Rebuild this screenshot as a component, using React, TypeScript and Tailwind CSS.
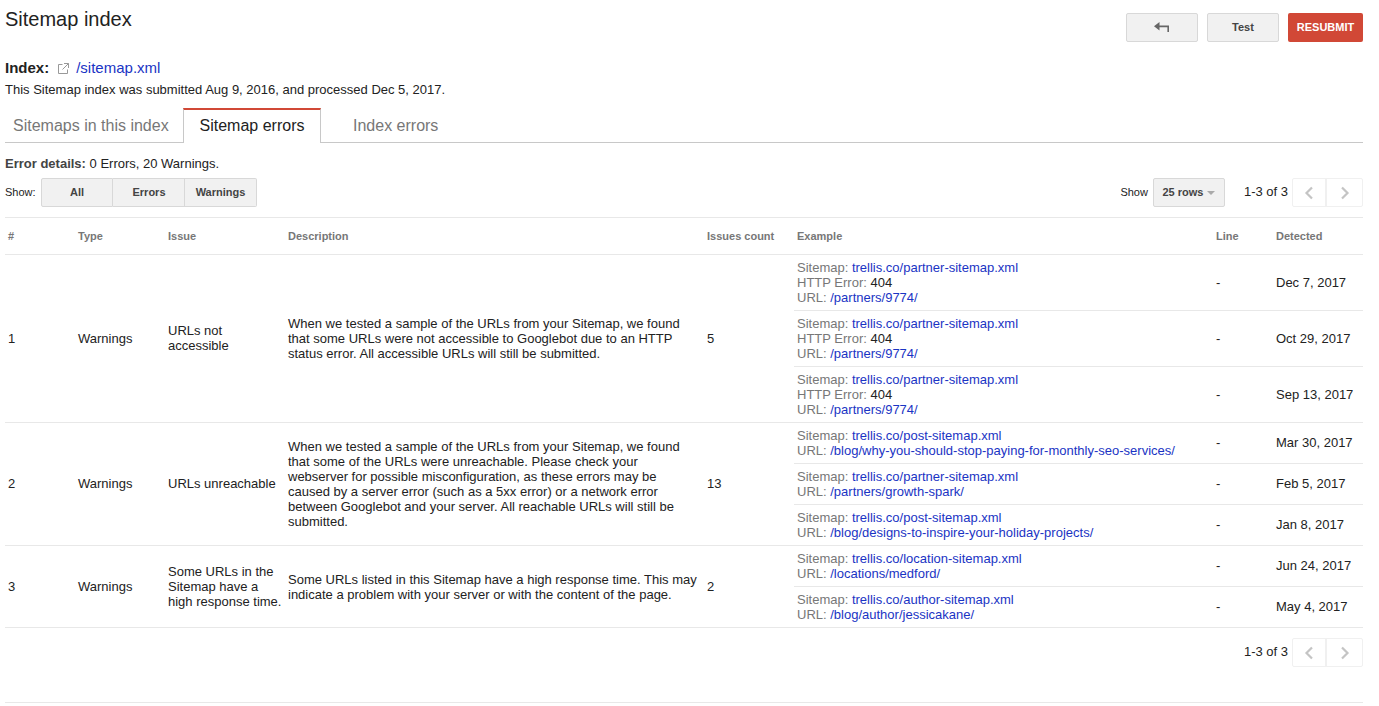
const rows = [
  {
    n: "1",
    issue: "URLs not accessible",
    issuePad: "pb-[2px]",
    cellPad: "",
    count: "5",
    desc: "When we tested a sample of the URLs from your Sitemap, we found that some URLs were not accessible to Googlebot due to an HTTP status error. All accessible URLs will still be submitted.",
    examples: [
      { sitemap: "trellis.co/partner-sitemap.xml", http: "404", url: "/partners/9774/", date: "Dec 7, 2017" },
      { sitemap: "trellis.co/partner-sitemap.xml", http: "404", url: "/partners/9774/", date: "Oct 29, 2017" },
      { sitemap: "trellis.co/partner-sitemap.xml", http: "404", url: "/partners/9774/", date: "Sep 13, 2017" },
    ],
  },
  {
    n: "2",
    issue: "URLs unreachable",
    issuePad: "pb-[2px]",
    cellPad: "pb-[2px]",
    count: "13",
    desc: "When we tested a sample of the URLs from your Sitemap, we found that some of the URLs were unreachable. Please check your webserver for possible misconfiguration, as these errors may be caused by a server error (such as a 5xx error) or a network error between Googlebot and your server. All reachable URLs will still be submitted.",
    examples: [
      { sitemap: "trellis.co/post-sitemap.xml", url: "/blog/why-you-should-stop-paying-for-monthly-seo-services/", date: "Mar 30, 2017" },
      { sitemap: "trellis.co/partner-sitemap.xml", url: "/partners/growth-spark/", date: "Feb 5, 2017" },
      { sitemap: "trellis.co/post-sitemap.xml", url: "/blog/designs-to-inspire-your-holiday-projects/", date: "Jan 8, 2017" },
    ],
  },
  {
    n: "3",
    issue: "Some URLs in the Sitemap have a high response time.",
    issuePad: "",
    cellPad: "",
    count: "2",
    desc: "Some URLs listed in this Sitemap have a high response time. This may indicate a problem with your server or with the content of the page.",
    examples: [
      { sitemap: "trellis.co/location-sitemap.xml", url: "/locations/medford/", date: "Jun 24, 2017" },
      { sitemap: "trellis.co/author-sitemap.xml", url: "/blog/author/jessicakane/", date: "May 4, 2017" },
    ],
  },
];

const grayBtn = "flex h-[29px] items-center justify-center rounded-[2px] border border-[#d8d8d8] bg-[#f1f1f1] text-[11px] font-bold text-[#444]";

function Pager() {
  return (
    <div className="flex items-center">
      <span className="mr-[4px] pb-[2px] text-[13px] text-[#222]">1-3 of 3</span>
      <div className="flex h-[29px] rounded-[2px] border border-[#f0f0f0]">
        <div className="flex w-[34px] items-center justify-center border-r-2 border-[#f0f0f0]">
          <svg width="10" height="14" viewBox="0 0 10 14" fill="none" stroke="#c4c4c4" strokeWidth="2.2"><path d="M8 1.5 2.5 7 8 12.5" /></svg>
        </div>
        <div className="flex w-[35px] items-center justify-center">
          <svg width="10" height="14" viewBox="0 0 10 14" fill="none" stroke="#c4c4c4" strokeWidth="2.2"><path d="M2 1.5 7.5 7 2 12.5" /></svg>
        </div>
      </div>
    </div>
  );
}

export default function App() {
  return (
    <div className="h-[706px] w-[1379px] overflow-hidden bg-white font-['Liberation_Sans',Arial,sans-serif] text-[13px] text-[#222]">
      <div className="ml-[5px] w-[1358px]">
        <div className="flex h-[50px] items-start justify-between">
          <h1 className="mt-[7px] text-[20px] leading-[24px] text-[#222]">Sitemap index</h1>
          <div className="mt-[13px] flex gap-[9px]">
            <button className={grayBtn + " w-[72px]"}>
              <svg width="16" height="11" viewBox="0 0 16 11" fill="#666"><path d="M5.5 0v3.5H15V10h-1.6V5.2H5.5v3.3L0 4.2z" /></svg>
            </button>
            <button className={grayBtn + " w-[72px]"}>Test</button>
            <button className="flex h-[29px] w-[75px] items-center justify-center rounded-[2px] bg-[#d14836] text-[11px] font-bold text-white">RESUBMIT</button>
          </div>
        </div>
        <div className="mt-[8px] flex h-[20px] items-center text-[15px]">
          <span className="font-bold">Index:</span>
          <svg className="ml-[9px]" width="11" height="11" viewBox="0 0 11 11" fill="none" stroke="#999" strokeWidth="1"><path d="M4.5 1.5h-4v9h9v-4M6 .5h4.5V5M10.5.5 4.5 6.5" /></svg>
          <span className="ml-[7px] text-[#1a34c4]">/sitemap.xml</span>
        </div>
        <p className="mt-[2px] h-[19px] leading-[19px]">This Sitemap index was submitted Aug 9, 2016, and processed Dec 5, 2017.</p>
        <div className="mt-[9px] flex h-[35px] border-b border-[#c8c8c8] text-[16px] leading-[35px]">
          <div className="w-[178px] pl-[8px] text-[#777]">Sitemaps in this index</div>
          <div className="z-10 -mb-px w-[138px] border-x border-t-2 border-[#c8c8c8] border-t-[#d14836] bg-white text-center leading-[31px] text-[#222]">Sitemap errors</div>
          <div className="ml-[32px] text-[#777]">Index errors</div>
        </div>
        <p className="mt-[13px] h-[15px] leading-[15px]"><span className="font-bold text-[#444]">Error details:</span> 0 Errors, 20 Warnings.</p>
        <div className="mt-[7px] flex items-center justify-between">
          <div className="flex items-center">
            <span className="w-[36px] text-[11px]">Show:</span>
            <button className={grayBtn + " w-[72px] rounded-r-none"}>All</button>
            <button className={grayBtn + " w-[72px] rounded-none border-l-0 pl-[1px]"}>Errors</button>
            <button className={grayBtn + " w-[72px] rounded-l-none border-l-0 border-[#c4c4c4] bg-[#e0e0e0] text-[#333]"}>Warnings</button>
          </div>
          <div className="flex items-center">
            <span className="mr-[5px] text-[11px]">Show</span>
            <button className={grayBtn + " w-[72px] gap-[4px] font-bold"}>
              25 rows
              <span className="h-0 w-0 border-x-[4px] border-t-[4px] border-x-transparent border-t-[#aaa]" />
            </button>
            <div className="ml-[19px]"><Pager /></div>
          </div>
        </div>
        <table className="mt-[10px] w-[1358px] table-fixed border-collapse">
          <colgroup>
            <col className="w-[70px]" />
            <col className="w-[90px]" />
            <col className="w-[120px]" />
            <col className="w-[419px]" />
            <col className="w-[90px]" />
            <col className="w-[419px]" />
            <col className="w-[60px]" />
            <col className="w-[90px]" />
          </colgroup>
          <thead>
            <tr className="h-[37px] border-y border-[#e8e8e8] text-left text-[11px] font-bold text-[#777]">
              <th className="px-[3px]">#</th>
              <th className="px-[3px]">Type</th>
              <th className="px-[3px]">Issue</th>
              <th className="px-[3px]">Description</th>
              <th className="px-[3px]">Issues count</th>
              <th className="px-[3px]">Example</th>
              <th className="px-[3px]">Line</th>
              <th className="px-[3px]">Detected</th>
            </tr>
          </thead>
          <tbody className="leading-[15px]">
            {rows.map((row) =>
              row.examples.map((ex, i) => (
                <tr key={row.n + i} className={(ex.http ? "h-[56px] " : "h-[41px] ") + "border-b border-[#e8e8e8]"}>
                  {i === 0 && (
                    <>
                      <td rowSpan={row.examples.length} className={"px-[3px] " + row.cellPad}>{row.n}</td>
                      <td rowSpan={row.examples.length} className={"px-[3px] " + row.cellPad}>Warnings</td>
                      <td rowSpan={row.examples.length} className={"px-[3px] " + row.issuePad}>{row.issue}</td>
                      <td rowSpan={row.examples.length} className="px-[3px]">{row.desc}</td>
                      <td rowSpan={row.examples.length} className={"px-[3px] " + row.cellPad}>{row.count}</td>
                    </>
                  )}
                  <td className="px-[3px] text-[#777]">
                    <div>Sitemap: <span className="text-[#1a34c4]">{ex.sitemap}</span></div>
                    {ex.http && <div>HTTP Error: <span className="text-[#222]">{ex.http}</span></div>}
                    <div>URL: <span className="text-[#1a34c4]">{ex.url}</span></div>
                  </td>
                  <td className={ex.http ? "px-[3px]" : "px-[3px] pb-[2px]"}>-</td>
                  <td className={ex.http ? "px-[3px]" : "px-[3px] pb-[2px]"}>{ex.date}</td>
                </tr>
              ))
            )}
          </tbody>
        </table>
        <div className="mt-[10px] flex justify-end"><Pager /></div>
        <div className="mt-[35px] border-t border-[#e8e8e8]" />
      </div>
    </div>
  );
}
